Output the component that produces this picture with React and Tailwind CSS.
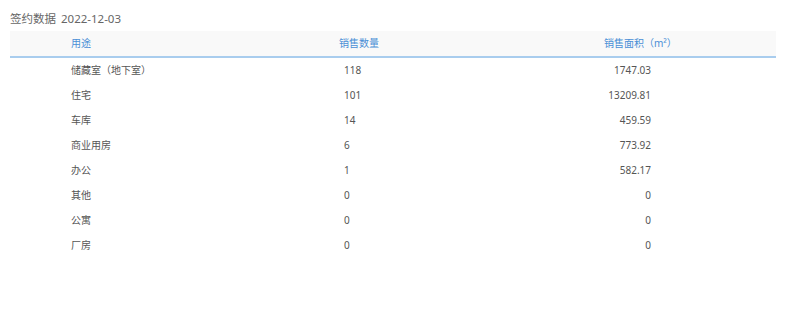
import React from 'react';

const rows = [
    { use: '储藏室（地下室）', count: '118', area: '1747.03' },
    { use: '住宅', count: '101', area: '13209.81' },
    { use: '车库', count: '14', area: '459.59' },
    { use: '商业用房', count: '6', area: '773.92' },
    { use: '办公', count: '1', area: '582.17' },
    { use: '其他', count: '0', area: '0' },
    { use: '公寓', count: '0', area: '0' },
    { use: '厂房', count: '0', area: '0' },
];

const font = { fontFamily: '"Noto Sans", "Noto Sans CJK SC", sans-serif' };

export default function App() {
    return (
        <div className="w-[802px] h-[314px] bg-white" style={font}>
            <div className="flex pl-[10px] pt-[11px] h-[31px] text-[11.5px] leading-[16px] text-[#666]">
                <span>签约数据</span>
                <span className="ml-[5px]">2022-12-03</span>
            </div>

            {/* table */}
            <div className="ml-[10px] w-[766px]">
                <div className="flex items-center h-[27px] bg-[#f9f9f9] border-b-2 border-[#a9cdee] text-[10px] text-[#4a8fd6]">
                    <div className="w-[329px] pl-[61px]">用途</div>
                    <div className="w-[265px]">销售数量</div>
                    <div>销售面积（m²）</div>
                </div>

                {rows.map((r) => (
                    <div key={r.use} className="flex items-center h-[25px] text-[10px] text-[#555]">
                        <div className="w-[334px] pl-[61px]">{r.use}</div>
                        <div className="w-[307px]">{r.count}</div>
                        <div className="w-[0px] flex justify-end">{r.area}</div>
                    </div>
                ))}
            </div>
        </div>
    );
}
